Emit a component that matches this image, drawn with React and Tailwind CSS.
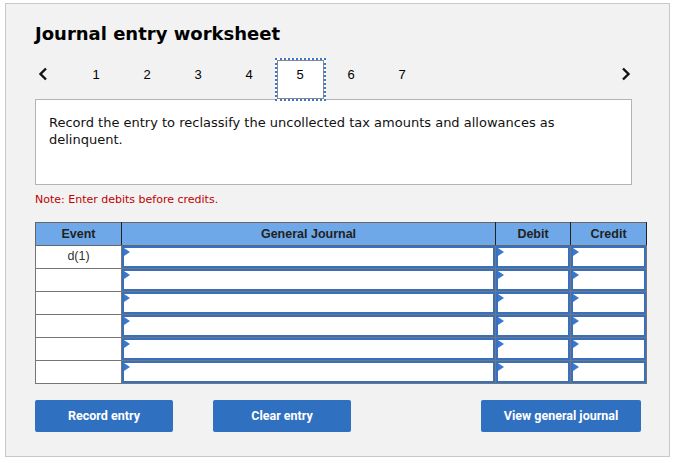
import React from "react";

const Tri = () => (
  <svg className="absolute left-0 top-0" width="6" height="8" viewBox="0 0 6 8">
    <path d="M0 0 L6 4 L0 8 Z" fill="#3a78d0" />
  </svg>
);

const InputCell = () => (
  <td className="relative h-[23px] border border-[#767676] p-0">
    <div className="relative h-full w-full border-2 border-[#3870c0] bg-white">
      <Tri />
    </div>
  </td>
);

export default function App() {
  const rows = ["d(1)", "", "", "", "", ""];
  const nums = [1, 2, 3, 4, 5, 6, 7];
  return (
    <div className="min-h-[463px] w-[678px] bg-white pl-[5px] pt-[3px]">
      <div className="relative h-[454px] w-[665px] border border-[#c8c8c8] bg-[#f2f2f2] pl-[29px] pt-[19px]">
        <h1
          className="text-[18px] font-bold leading-[22px] text-black"
          style={{ fontFamily: '"DejaVu Sans", Verdana, sans-serif' }}
        >
          Journal entry worksheet
        </h1>
        <div className="mt-[13px] flex h-[43px] w-[596px] items-start" style={{ fontFamily: '"Liberation Sans", Arial, sans-serif' }}>
          <div className="flex w-[35.5px] items-center pl-[3px] pt-[9px]">
            <svg width="10" height="14" viewBox="0 0 10 14">
              <path d="M8 1.5 L2.5 7 L8 12.5" fill="none" stroke="#111" strokeWidth="2.4" />
            </svg>
          </div>
          {nums.map((n) =>
            n === 5 ? (
              <div
                key={n}
                className="relative z-10 flex h-[43px] w-[51px] justify-center border-2 border-dotted border-[#3a78d0] bg-white pt-[7px] text-[13px] leading-[16px] text-black outline outline-1 -outline-offset-3 outline-[#888]"
              >
                {n}
              </div>
            ) : (
              <div key={n} className="flex w-[51px] justify-center pt-[9px] text-[13px] leading-[16px] text-black">
                {n}
              </div>
            )
          )}
          <div className="ml-auto flex items-center pt-[9px]">
            <svg width="10" height="14" viewBox="0 0 10 14">
              <path d="M2 1.5 L7.5 7 L2 12.5" fill="none" stroke="#111" strokeWidth="2.4" />
            </svg>
          </div>
        </div>
        <div
          className="-mt-[2px] h-[86px] w-[597px] border border-[#b4b4b4] bg-white pl-[13px] pr-[40px] pt-[14px] text-[13px] leading-[17px] text-[#111]"
          style={{ fontFamily: '"DejaVu Sans", Verdana, sans-serif' }}
        >
          Record the entry to reclassify the uncollected tax amounts and allowances as delinquent.
        </div>
        <div
          className="mt-[8px] text-[11px] leading-[14px] text-[#c00000]"
          style={{ fontFamily: '"DejaVu Sans", Verdana, sans-serif' }}
        >
          Note: Enter debits before credits.
        </div>
        <table
          className="mt-[15px] w-[612px] border-collapse"
          style={{ fontFamily: '"Liberation Sans", Arial, sans-serif' }}
        >
          <thead>
            <tr className="h-[23px] bg-[#6fa8e8] text-[12.5px] font-bold text-[#222]">
              <th className="w-[86px] border border-[#666] border-r-[#222] font-bold">Event</th>
              <th className="w-[374px] border border-[#666] border-r-[#222] font-bold">General Journal</th>
              <th className="w-[75px] border border-[#666] border-r-[#222] font-bold">Debit</th>
              <th className="w-[76px] border border-[#666] border-r-[#222] font-bold">Credit</th>
            </tr>
          </thead>
          <tbody>
            {rows.map((r, i) => (
              <tr key={i} className="h-[23px]">
                <td className="border border-[#767676] bg-white p-0 text-center align-top text-[12.5px] leading-[20px] text-[#333]">
                  {r}
                </td>
                <InputCell />
                <InputCell />
                <InputCell />
              </tr>
            ))}
          </tbody>
        </table>
        <div
          className="mt-[16px] flex w-[606px] items-center text-[12.5px] font-bold text-white"
          style={{ fontFamily: 'Roboto, "Liberation Sans", sans-serif' }}
        >
          <button className="h-[32px] w-[138px] rounded-[2px] bg-[#2f70c1]">Record entry</button>
          <button className="ml-[40px] h-[32px] w-[138px] rounded-[2px] bg-[#2f70c1]">Clear entry</button>
          <button className="ml-auto h-[32px] w-[160px] rounded-[2px] bg-[#2f70c1]">View general journal</button>
        </div>
      </div>
    </div>
  );
}
